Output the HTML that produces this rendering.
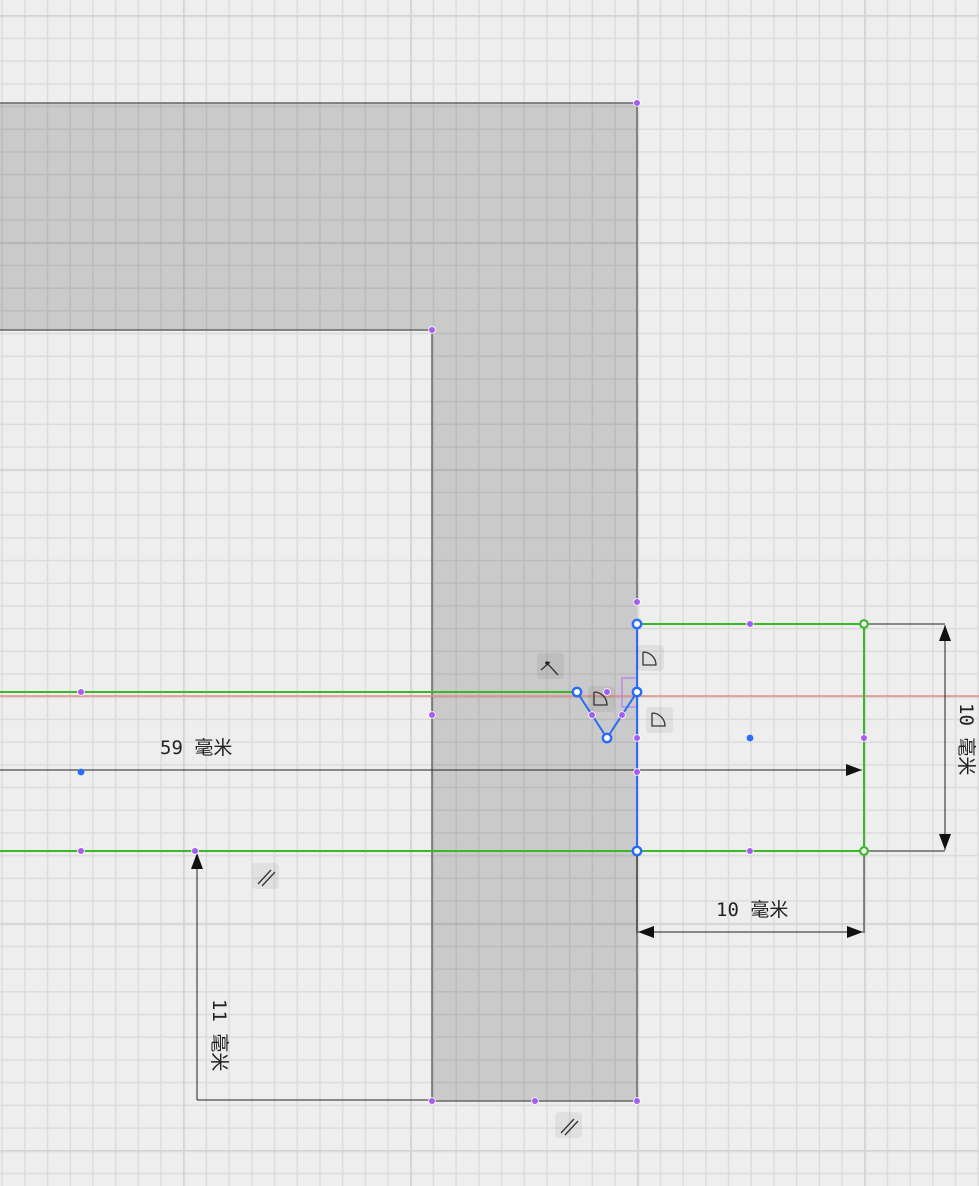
<!DOCTYPE html>
<html><head><meta charset="utf-8"><style>
html,body{margin:0;padding:0;background:#eeeeee;}
svg{display:block}
text{font-family:"DejaVu Sans Mono","Liberation Mono","Noto Sans CJK SC",monospace;font-size:19px;fill:#222}
</style></head><body>
<svg width="979" height="1186" viewBox="0 0 979 1186" xmlns="http://www.w3.org/2000/svg">
<defs>
<pattern id="minor" x="1.4" y="15" width="22.7" height="22.7" patternUnits="userSpaceOnUse">
<path d="M0.5 0V22.7M0 0.5H22.7" stroke="rgba(0,0,0,0.075)" stroke-width="2" fill="none"/>
</pattern>
<pattern id="major" x="183" y="15" width="227" height="227" patternUnits="userSpaceOnUse">
<path d="M1 0V227M0 1H227" stroke="rgba(0,0,0,0.045)" stroke-width="3" fill="none"/>
</pattern>
<marker id="ar" markerWidth="16" markerHeight="12" refX="16" refY="6" orient="auto-start-reverse" markerUnits="userSpaceOnUse">
<path d="M0 0L16 6L0 12Z" fill="#111"/>
</marker>
</defs>
<rect width="979" height="1186" fill="#eeeeee"/>
<polygon points="0,103 637,103 637,1101 432,1101 432,330 0,330" fill="#cacaca"/>
<rect width="979" height="1186" fill="url(#minor)"/>
<rect width="979" height="1186" fill="url(#major)"/>
<path d="M0 103H637V602M637 851V1101H432V330H0" stroke="#666" stroke-width="1.5" fill="none"/>
<line x1="0" y1="696" x2="979" y2="696" stroke="#e88a8a" stroke-width="1.5"/>
<g stroke="#3bb82a" stroke-width="2" fill="none">
<path d="M0 692H577"/><path d="M0 851H864"/><path d="M637 624H864V851"/>
</g>
<rect x="622" y="678" width="15" height="29" fill="none" stroke="#b67cf0" stroke-width="1.2"/>
<g stroke="#2a6cf5" stroke-width="2" fill="none">
<path d="M637 624V851"/><path d="M577 692L607 738L637 692"/>
</g>
<g stroke="#222" stroke-width="1" fill="none">
<line x1="0" y1="770" x2="862" y2="770" marker-end="url(#ar)"/>
<path d="M864 624H945M864 851H945"/>
<line x1="945" y1="625" x2="945" y2="850" marker-start="url(#ar)" marker-end="url(#ar)"/>
<path d="M637 851V933M864 851V933"/>
<line x1="638" y1="932" x2="863" y2="932" marker-start="url(#ar)" marker-end="url(#ar)"/>
<path d="M197 1100H432"/>
<line x1="197" y1="853" x2="197" y2="1100" marker-start="url(#ar)"/>
</g>
<text x="160" y="754">59 毫米</text>
<text x="716" y="916">10 毫米</text>
<text transform="translate(960,703) rotate(90)">10 毫米</text>
<text transform="translate(213,999) rotate(90)">11 毫米</text>
<g fill="rgba(0,0,0,0.06)">
<rect x="252" y="863" width="27" height="26" rx="4"/>
<rect x="555" y="1112" width="27" height="26" rx="4"/>
<rect x="537" y="653" width="27" height="26" rx="4"/>
<rect x="637" y="645" width="27" height="26" rx="4"/>
<rect x="588" y="686" width="27" height="26" rx="4"/>
<rect x="646" y="707" width="27" height="26" rx="4"/>
</g>
<g stroke="#333" stroke-width="1.3" fill="none">
<path d="M258 884L271 870M262 886L275 872"/>
<path d="M561 1133L574 1119M565 1135L578 1121"/>
<path d="M541 670L550 662M547 663L558 675"/>
<path d="M643 652V665H656A13 13 0 0 0 643 652"/>
<path d="M594 692V705H607A13 13 0 0 0 594 692"/>
<path d="M652 713V726H665A13 13 0 0 0 652 713"/>
</g>
<circle cx="547" cy="663" r="1.8" fill="#222"/>
<g fill="#a65cf2" stroke="#fff" stroke-width="0.8">
<circle cx="637" cy="103" r="3.4"/><circle cx="432" cy="330" r="3.4"/><circle cx="432" cy="715" r="3.4"/>
<circle cx="637" cy="602" r="3.4"/><circle cx="750" cy="624" r="3.4"/><circle cx="81" cy="692" r="3.4"/>
<circle cx="81" cy="851" r="3.4"/><circle cx="195" cy="851" r="3.4"/><circle cx="750" cy="851" r="3.4"/>
<circle cx="864" cy="738" r="3.4"/><circle cx="637" cy="738" r="3.4"/><circle cx="637" cy="772" r="3.4"/>
<circle cx="592" cy="715" r="3.4"/><circle cx="622" cy="715" r="3.4"/><circle cx="607" cy="692" r="3.4"/>
<circle cx="432" cy="1101" r="3.4"/><circle cx="535" cy="1101" r="3.4"/><circle cx="637" cy="1101" r="3.4"/>
</g>
<g fill="#2a6cf5">
<circle cx="750" cy="738" r="3.4"/><circle cx="81" cy="772" r="3.4"/>
</g>
<g fill="#fff" stroke="#2a6cf5" stroke-width="2.4">
<circle cx="637" cy="624" r="4.2"/><circle cx="577" cy="692" r="4.2"/><circle cx="637" cy="692" r="4.2"/>
<circle cx="607" cy="738" r="4.2"/><circle cx="637" cy="851" r="4.2"/>
</g>
<g fill="#fff" stroke="#3bb82a" stroke-width="2.2">
<circle cx="864" cy="624" r="3.8"/><circle cx="864" cy="851" r="3.8"/>
</g>
</svg>
</body></html>
